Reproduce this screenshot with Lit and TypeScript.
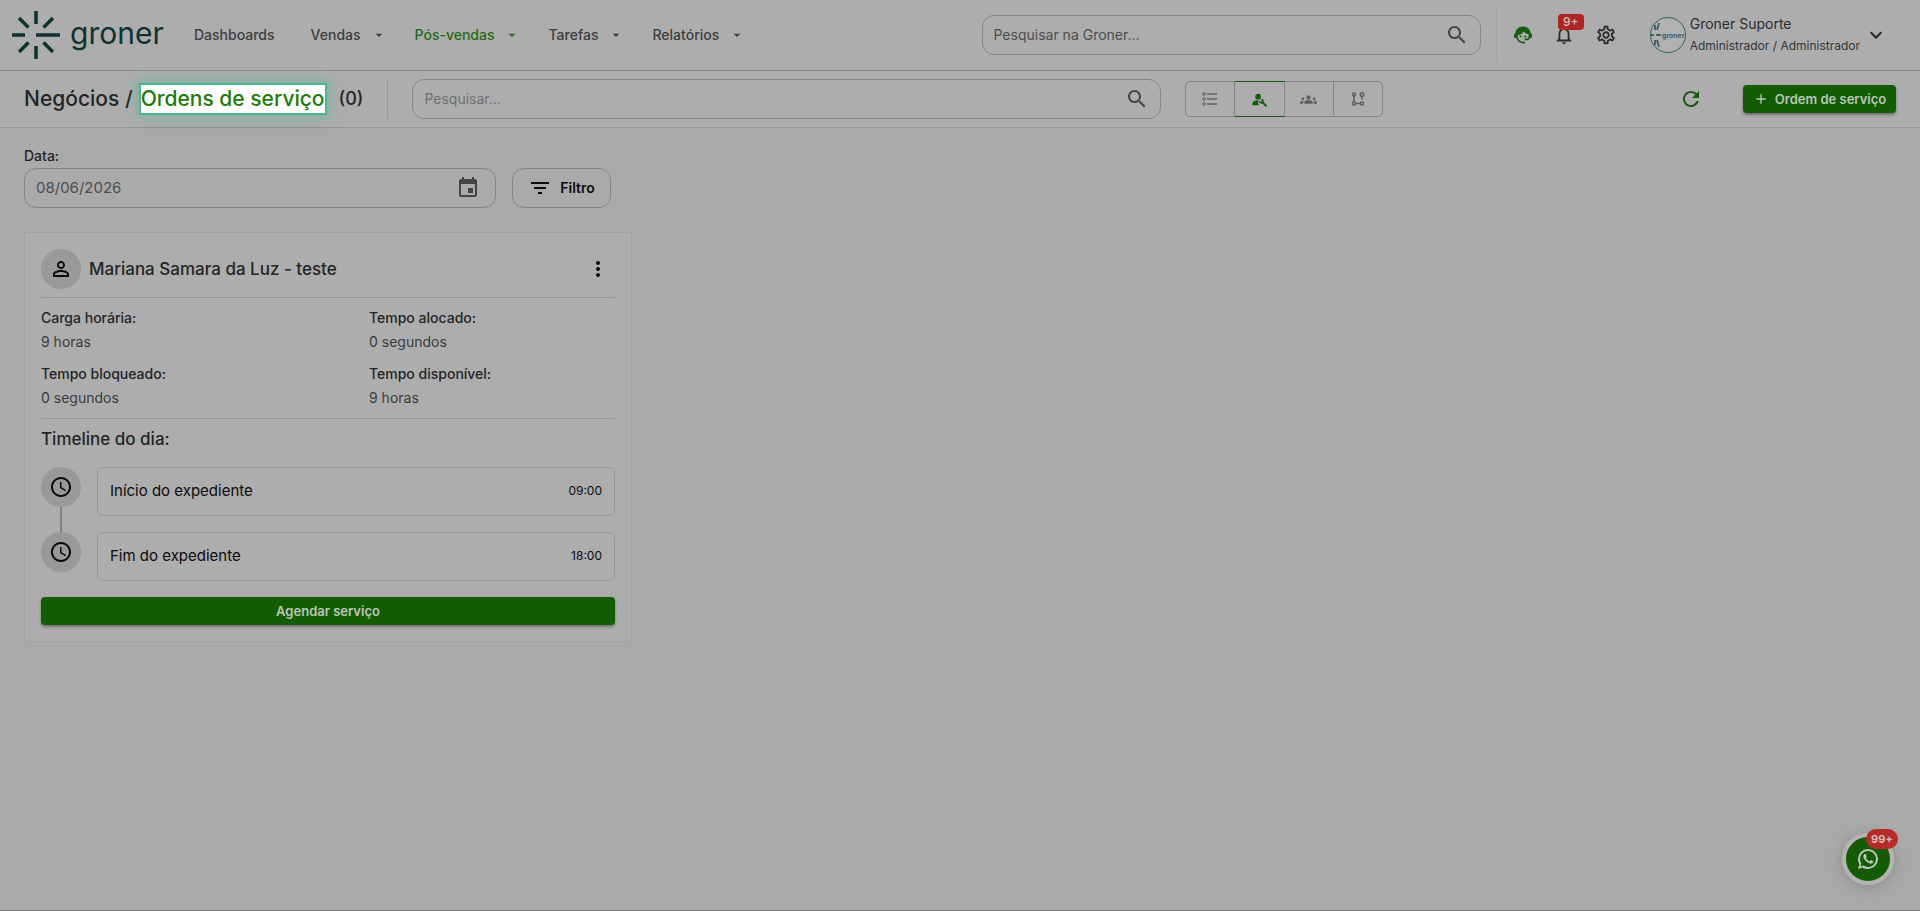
import { LitElement, html, svg, css } from "lit";
import { customElement, state } from "lit/decorators.js";
import { classMap } from "lit/directives/class-map.js";

const icon = (d: string, size = 24) => html`<svg class="icon" width=${size} height=${size} viewBox="0 0 24 24" aria-hidden="true"><path fill="currentColor" d=${d} /></svg>`;

const paths = {
  caret: "m7 10 5 5 5-5z",
  search: "M15.5 14h-.79l-.28-.27C15.41 12.59 16 11.11 16 9.5 16 5.91 13.09 3 9.5 3S3 5.91 3 9.5 5.91 16 9.5 16c1.61 0 3.09-.59 4.23-1.57l.27.28v.79l5 4.99L20.49 19l-4.99-5zm-6 0C7.01 14 5 11.99 5 9.5S7.01 5 9.5 5 14 7.01 14 9.5 11.99 14 9.5 14z",
  bell: "M12 22c1.1 0 2-.9 2-2h-4c0 1.1.9 2 2 2zm6-6v-5c0-3.07-1.63-5.64-4.5-6.32V4c0-.83-.67-1.5-1.5-1.5s-1.5.67-1.5 1.5v.68C7.64 5.36 6 7.92 6 11v5l-2 2v1h16v-1l-2-2zm-2 1H8v-6c0-2.48 1.51-4.5 4-4.5s4 2.02 4 4.5v6z",
  gear: "M19.43 12.98c.04-.32.07-.64.07-.98 0-.34-.03-.66-.07-.98l2.11-1.65c.19-.15.24-.42.12-.64l-2-3.46c-.09-.16-.26-.25-.44-.25-.06 0-.12.01-.17.03l-2.49 1c-.52-.4-1.08-.73-1.69-.98l-.38-2.65C14.46 2.18 14.25 2 14 2h-4c-.25 0-.46.18-.49.42l-.38 2.65c-.61.25-1.17.59-1.69.98l-2.49-1c-.06-.02-.12-.03-.18-.03-.17 0-.34.09-.43.25l-2 3.46c-.13.22-.07.49.12.64l2.11 1.65c-.04.32-.07.65-.07.98 0 .33.03.66.07.98l-2.11 1.65c-.19.15-.24.42-.12.64l2 3.46c.09.16.26.25.44.25.06 0 .12-.01.17-.03l2.49-1c.52.4 1.08.73 1.69.98l.38 2.65c.03.24.24.42.49.42h4c.25 0 .46-.18.49-.42l.38-2.65c.61-.25 1.17-.59 1.69-.98l2.49 1c.06.02.12.03.18.03.17 0 .34-.09.43-.25l2-3.46c.12-.22.07-.49-.12-.64l-2.11-1.65zm-1.98-1.71c.04.31.05.52.05.73 0 .21-.02.43-.05.73l-.14 1.13.89.7 1.08.84-.7 1.21-1.27-.51-1.04-.42-.9.68c-.43.32-.84.56-1.25.73l-1.06.43-.16 1.13-.2 1.35h-1.4l-.19-1.35-.16-1.13-1.06-.43c-.43-.18-.83-.41-1.23-.71l-.91-.7-1.06.43-1.27.51-.7-1.21 1.08-.84.89-.7-.14-1.13c-.03-.31-.05-.54-.05-.74s.02-.43.05-.73l.14-1.13-.89-.7-1.08-.84.7-1.21 1.27.51 1.04.42.9-.68c.43-.32.84-.56 1.25-.73l1.06-.43.16-1.13.2-1.35h1.39l.19 1.35.16 1.13 1.06.43c.43.18.83.41 1.23.71l.91.7 1.06-.43 1.27-.51.7 1.21-1.07.85-.89.7.14 1.13zM12 8c-2.21 0-4 1.79-4 4s1.79 4 4 4 4-1.79 4-4-1.79-4-4-4zm0 6c-1.1 0-2-.9-2-2s.9-2 2-2 2 .9 2 2-.9 2-2 2z",
  chevron: "M7.41 8.59 12 13.17l4.59-4.58L18 10l-6 6-6-6 1.41-1.41z",
  engineer: "M10.67 13.02C10.45 13.01 10.23 13 10 13c-2.42 0-4.680.67-6.610 1.820C2.510 15.340 2 16.320 2 17.350V20h9.260C10.470 18.870 10 17.490 10 16c0-1.070.25-2.070.67-2.980zM10 4a4 4 0 1 0 0 8 4 4 0 0 0 0-8zM22.600 20.400l-4.700-4.700c.5-1.200.2-2.600-.7-3.600-1-1-2.600-1.200-3.800-.6l2.200 2.200-1.600 1.600-2.200-2.200c-.6 1.200-.4 2.800.6 3.800 1 .9 2.400 1.200 3.600.7l4.700 4.700c.2.2.5.2.7 0l1.200-1.200c.3-.2.3-.5 0-.7z",
  groups: "M12 12.750c1.630 0 3.070.39 4.240.9 1.080.48 1.760 1.560 1.760 2.730V18H6v-1.610c0-1.180.68-2.260 1.760-2.730 1.170-.52 2.610-.91 4.240-.91zM4 13c1.100 0 2-.9 2-2s-.9-2-2-2-2 .9-2 2 .9 2 2 2zm1.130 1.100C4.760 14.040 4.390 14 4 14c-.99 0-1.930.21-2.780.58C.48 14.900 0 15.620 0 16.430V18h4.500v-1.610c0-.83.23-1.610.63-2.290zM20 13c1.100 0 2-.9 2-2s-.9-2-2-2-2 .9-2 2 .9 2 2 2zm4 3.430c0-.81-.48-1.530-1.220-1.850-.85-.37-1.790-.58-2.780-.58-.39 0-.76.04-1.130.1.4.68.63 1.460.63 2.290V18H24v-1.570zM12 6c1.660 0 3 1.340 3 3s-1.340 3-3 3-3-1.340-3-3 1.340-3 3-3z",
  refresh: "M17.650 6.350C16.200 4.900 14.210 4 12 4c-4.420 0-7.990 3.580-7.990 8s3.570 8 7.990 8c3.730 0 6.840-2.550 7.730-6h-2.080c-.82 2.330-3.040 4-5.650 4-3.310 0-6-2.690-6-6s2.690-6 6-6c1.660 0 3.140.69 4.220 1.780L13 11h7V4l-2.350 2.350z",
  plus: "M19 13h-6v6h-2v-6H5v-2h6V5h2v6h6v2z",
  calendar: "M17 12h-5v5h5v-5zM16 1v2H8V1H6v2H5c-1.110 0-1.990.9-1.990 2L3 19c0 1.100.89 2 2 2h14c1.100 0 2-.9 2-2V5c0-1.100-.9-2-2-2h-1V1h-2zm3 18H5V8h14v11z",
  filter: "M10 18h4v-2h-4v2zM3 6v2h18V6H3zm3 7h12v-2H6v2z",
  person: "M12 5.900c1.160 0 2.100.94 2.100 2.100s-.94 2.100-2.100 2.100S9.900 9.160 9.900 8s.94-2.100 2.100-2.100m0 9c2.970 0 6.100 1.460 6.100 2.100v1.100H5.900V17c0-.64 3.130-2.100 6.100-2.100M12 4C9.790 4 8 5.790 8 8s1.790 4 4 4 4-1.790 4-4-1.790-4-4-4zm0 9c-2.670 0-8 1.340-8 4v3h16v-3c0-2.660-5.330-4-8-4z",
  dots: "M12 8c1.100 0 2-.9 2-2s-.9-2-2-2-2 .9-2 2 .9 2 2 2zm0 2c-1.100 0-2 .9-2 2s.9 2 2 2 2-.9 2-2-.9-2-2-2zm0 6c-1.100 0-2 .9-2 2s.9 2 2 2 2-.9 2-2-.9-2-2-2z",
  clock: "M11.990 2C6.470 2 2 6.480 2 12s4.470 10 9.990 10C17.520 22 22 17.520 22 12S17.520 2 11.990 2zM12 20c-4.420 0-8-3.580-8-8s3.580-8 8-8 8 3.580 8 8-3.580 8-8 8zm.5-13H11v6l5.250 3.150.75-1.230-4.500-2.670z",
  whatsapp: "M16.750 13.960c.25.13.41.2.46.3.06.11.04.61-.21 1.180-.2.56-1.240 1.100-1.700 1.120-.46.02-.47.36-2.960-.73-2.490-1.090-3.990-3.750-4.110-3.920-.12-.17-.96-1.380-.92-2.610.05-1.220.69-1.800.95-2.040.24-.26.51-.29.68-.26h.47c.15 0 .36-.06.55.45l.69 1.870c.06.13.1.28.01.44l-.27.41-.39.42c-.12.12-.26.25-.12.5.12.26.62 1.090 1.320 1.780.91.88 1.710 1.170 1.950 1.300.24.14.39.12.54-.04l.81-.94c.19-.25.35-.19.58-.11l1.670.88M12 2a10 10 0 0 1 10 10 10 10 0 0 1-10 10c-1.970 0-3.800-.57-5.350-1.550L2 22l1.550-4.650A9.969 9.969 0 0 1 2 12 10 10 0 0 1 12 2m0 2a8 8 0 0 0-8 8c0 1.720.54 3.310 1.460 4.610L4.500 19.500l2.890-.96A7.950 7.950 0 0 0 12 20a8 8 0 0 0 8-8 8 8 0 0 0-8-8z",
};

const listIcon = html`<svg class="icon" width="18" height="18" viewBox="0 0 18 18" fill="none" stroke="currentColor" aria-hidden="true">
  <path stroke-width="1.500" d="M6 4h10M6 9h10M6 14h10" />
  <circle cx="3" cy="4" r="1.300" /><circle cx="3" cy="9" r="1.300" /><circle cx="3" cy="14" r="1.300" /></svg>`;

const routeIcon = html`<svg class="icon" width="16" height="16" viewBox="0 0 16 16" fill="none" stroke="currentColor" stroke-width="1.500" aria-hidden="true">
  <circle cx="4" cy="3.500" r="1.500" /><circle cx="4" cy="12.500" r="1.500" /><circle cx="12" cy="12.500" r="1.500" /><circle cx="12" cy="3.500" r="1.800" />
  <path d="M4 5v6M5.500 12.500h5M12 5.500v3" /></svg>`;

const agentIcon = html`<svg class="icon" width="20" height="20" viewBox="0 0 20 20" aria-hidden="true">
  <path fill="currentColor" d="M10 1.500c-4.200 0-7.300 2.900-7.700 6.700C1.500 8.500 1 9.200 1 10v1.500c0 1 .8 1.800 1.800 1.800h.6c1 3 3.600 5.200 6.600 5.200h2v-1.700h-2c-2.900 0-5.300-2.600-5.300-5.800v-.6c2.600-.5 4.700-1.900 5.900-3.900 1.200 1.500 3 2.400 4.900 2.600v2.700c0 1-.8 1.800-1.800 1.800h-2.200v1.600h2.600c1.300 0 2.400-.8 2.900-1.900h.2c1 0 1.800-.8 1.800-1.800V10c0-.8-.5-1.500-1.300-1.800C17.300 4.400 14.200 1.500 10 1.500z" />
  <circle cx="7.500" cy="11.500" r="1.100" fill="currentColor" /><circle cx="12.300" cy="11.500" r="1.100" fill="currentColor" /></svg>`;

const rays = svg`<path d="M24 0v13M24 35v13M0 24h13M24 24h24M7 7l9.500 9.500M41 7l-9.500 9.500M7 41l9.500-9.500M41 41l-9.500-9.500" />`;

@customElement("app-root")
export class AppRoot extends LitElement {
  @state() private view = 1;

  private menu = [
    { label: "Dashboards", sub: false, active: false },
    { label: "Vendas", sub: true, active: false },
    { label: "Pós-vendas", sub: true, active: true },
    { label: "Tarefas", sub: true, active: false },
    { label: "Relatórios", sub: true, active: false },
  ];

  private views = [
    { name: "Lista", glyph: listIcon },
    { name: "Técnicos", glyph: icon(paths.engineer, 17) },
    { name: "Equipes", glyph: icon(paths.groups, 17) },
    { name: "Rotas", glyph: routeIcon },
  ];

  private stats = [
    ["Carga horária:", "9 horas"],
    ["Tempo alocado:", "0 segundos"],
    ["Tempo bloqueado:", "0 segundos"],
    ["Tempo disponível:", "9 horas"],
  ];

  private events = [
    ["Início do expediente", "09:00"],
    ["Fim do expediente", "18:00"],
  ];

  static styles = css`
    :host {
      display: flex;
      flex-direction: column;
      min-height: 100vh;
      box-sizing: border-box;
      border-bottom: 1px solid #7e7e7e;
      background: #aaaaaa;
      color: #232527;
      font: 14px/20px Inter, "Noto Sans", sans-serif;
    }
    *, *::before { box-sizing: border-box; }
    button, input { font: inherit; color: inherit; margin: 0; }
    button { border: 0; padding: 0; background: none; cursor: pointer; }
    a { color: inherit; text-decoration: none; }
    h1, h2, h3, p, dl, dd, ol { margin: 0; padding: 0; }
    .icon { display: block; flex: none; }

    .topbar {
      display: flex;
      align-items: center;
      height: 71px;
      padding: 0 32px 0 12px;
      background: #adadad;
      border-bottom: 1px solid #8c8c8c;
    }
    .logo { display: flex; align-items: center; gap: 10px; color: #0c3330; width: 166px; }
    .logo svg { flex: none; stroke: currentColor; stroke-width: 3.500; fill: none; }
    .word { font-size: 30px; line-height: 36px; padding-bottom: 4px; }
    .menu { display: flex; gap: 28px; margin-left: 16px; }
    .menu a { display: flex; align-items: center; gap: 10px; font-weight: 500; color: #3c3e40; white-space: nowrap; padding-right: 8px; }
    .menu a.sub { padding-right: 0; }
    .menu a.active { color: #256a17; }
    .spacer { flex: 1; }
    .field {
      display: flex;
      align-items: center;
      height: 40px;
      padding: 0 11px;
      border: 1px solid #858585;
      border-radius: 12px;
      color: #444444;
    }
    .field input { flex: 1; min-width: 0; border: 0; padding: 0; outline: 0; background: none; color: #4c4e50; }
    .field input::placeholder { color: #4c4e50; opacity: 1; }
    .field.global { flex: 0 1 26vw; margin-bottom: 1px; }
    .field.page { flex: 0 1 39vw; }
    .field.page input::placeholder { color: #707274; }
    .tools { display: flex; align-items: center; gap: 20px; height: 54px; margin-left: 15px; padding-left: 16px; border-left: 1px solid #a5a5a5; color: #2c2f31; }
    .tools .agent { color: #146010; }
    .bell { position: relative; }
    .count {
      position: absolute;
      left: 5px;
      top: -10px;
      width: 26px;
      line-height: 16px;
      border-radius: 4px;
      background: #b02522;
      color: #c9c0c0;
      font-size: 12px;
      font-weight: 500;
      text-align: center;
    }
    .user { display: flex; align-items: center; gap: 4px; margin-left: 33px; text-align: left; }
    .avatar { flex: none; display: block; }
    .name, .role { display: block; white-space: nowrap; }
    .name { line-height: 22px; color: #2b2d2f; }
    .role { font-size: 12px; line-height: 22px; color: #333537; }

    .subbar {
      display: flex;
      align-items: center;
      height: 57px;
      padding: 0 24px;
      background: #adadad;
      border-bottom: 1px solid #949494;
    }
    .title { display: flex; align-items: center; font-size: 21px; line-height: 28px; font-weight: 500; white-space: nowrap; }
    .current {
      margin: 0 14px 0 8px;
      outline: 2px solid #45b892;
      background: #ffffff;
      color: #1b7d06;
      box-shadow: 0 0 12px 6px rgba(70, 184, 146, 0.35);
    }
    .total { font-size: 18px; }
    .rule { width: 1px; height: 40px; margin: 0 24px; background: #989898; }
    .views { display: flex; margin-left: 24px; border: 1px solid #858585; border-radius: 5px; width: 198px; height: 36px; }
    .views button { flex: 1; display: grid; place-items: center; color: #5f5f5f; border-right: 1px solid #858585; }
    .views button:last-child { border-right: 0; }
    .views button.on { color: #155c0c; margin: -1px 0; border-top: 1px solid #155c0c; border-bottom: 1px solid #155c0c; }
    .refresh { color: #155c0c; margin-right: 40px; }
    .primary {
      display: flex;
      align-items: center;
      justify-content: center;
      gap: 6px;
      height: 28px;
      border-radius: 4px;
      background: #145c04;
      color: #bac7b6;
      font-size: 13px;
      font-weight: 600;
      white-space: nowrap;
      box-shadow: 0 2px 3px rgba(0, 0, 0, 0.35);
    }
    .new { width: 153px; }

    main { padding: 18px 24px; }
    .filters { display: flex; align-items: flex-end; gap: 16px; }
    .date { flex: 0 1 472px; }
    .date label { display: block; font-weight: 500; margin-bottom: 2px; }
    .date .field { padding-right: 15px; }
    .date input { font-size: 15px; }
    .filter {
      display: flex;
      align-items: center;
      justify-content: center;
      gap: 8px;
      width: 99px;
      height: 40px;
      border: 1px solid #858585;
      border-radius: 12px;
      color: #0b0b0b;
      font-weight: 600;
    }
    .cards { display: grid; grid-template-columns: repeat(3, minmax(0, 1fr)); gap: 24px; margin-top: 24px; }
    .card { padding: 16px; border: 1px solid #a2a2a2; border-radius: 2px; background: #adadad; }
    .head { display: flex; align-items: center; gap: 8px; padding-bottom: 8px; border-bottom: 1px solid #969696; }
    .head h2 { flex: 1; font-size: 17px; line-height: 24px; font-weight: 500; }
    .head button { color: #0b0b0b; margin-right: 5px; }
    .disc { display: grid; place-items: center; flex: none; width: 40px; height: 40px; border-radius: 50%; background: #999999; color: #0b0b0b; }
    .stats { display: grid; grid-template-columns: 4fr 3fr; gap: 8px 0; padding: 8px 0; border-bottom: 1px solid #969696; }
    .stats dt { font-weight: 500; line-height: 24px; }
    .stats dd { line-height: 24px; color: #3a3c3e; }
    .card h3 { font-size: 17px; line-height: 24px; font-weight: 500; margin: 8px 0 16px; }
    .timeline { list-style: none; }
    .timeline li { display: flex; gap: 16px; }
    .rail { display: flex; flex-direction: column; align-items: center; }
    .line { flex: 1; width: 2px; background: #808080; }
    .event {
      flex: 1;
      display: flex;
      align-items: center;
      justify-content: space-between;
      padding: 13px 12px 14px;
      margin-bottom: 16px;
      border: 1px solid #969696;
      border-radius: 6px;
      color: #0b0b0b;
      font-size: 15px;
    }
    .event time { font-size: 12px; }
    .book { width: 100%; }

    .chat {
      position: fixed;
      right: 26px;
      bottom: 26px;
      display: grid;
      place-items: center;
      width: 52px;
      height: 52px;
      border: 4px solid #b4b4b4;
      border-radius: 50%;
      background: #145c04;
      color: #bccabb;
      box-shadow: 0 2px 16px rgba(0, 0, 0, 0.2);
    }
    .unread {
      position: absolute;
      top: -8px;
      right: -8px;
      width: 32px;
      line-height: 20px;
      border-radius: 10px;
      background: #b62a28;
      color: #cdbdbd;
      font-size: 11px;
      font-weight: 700;
    }
  `;

  render() {
    return html`
      <header class="topbar">
        <a class="logo" href="#" aria-label="groner">
          <svg width="48" height="48" viewBox="0 0 48 48" aria-hidden="true">${rays}</svg>
          <span class="word">groner</span>
        </a>
        <nav class="menu">
          ${this.menu.map((m) => html`<a href="#" class=${classMap({ sub: m.sub, active: m.active })}>${m.label}${m.sub ? icon(paths.caret, 16) : ""}</a>`)}
        </nav>
        <span class="spacer"></span>
        <div class="field global">
          <input type="text" aria-label="Pesquisar na Groner" placeholder="Pesquisar na Groner..." />${icon(paths.search)}
        </div>
        <div class="tools">
          <button class="agent" aria-label="Suporte">${agentIcon}</button>
          <button class="bell" aria-label="Notificações">${icon(paths.bell, 22)}<span class="count">9+</span></button>
          <button aria-label="Configurações">${icon(paths.gear, 22)}</button>
        </div>
        <button class="user">
          <svg class="avatar" width="36" height="36" viewBox="0 0 36 36" aria-hidden="true">
            <circle cx="18" cy="18" r="17.500" fill="#b1b1b1" stroke="#2b6647" />
            <path d="M1 18h3M6 18h5M5 8v5M5 23v5M9 6l-2 7M9 30l-2-7" stroke="#3f6277" stroke-width="2" />
            <text x="12" y="21" font-size="7" fill="#2f5267" font-weight="600">groner</text>
          </svg>
          <span><span class="name">Groner Suporte</span><span class="role">Administrador / Administrador</span></span>
          ${icon(paths.chevron, 24)}
        </button>
      </header>

      <section class="subbar">
        <h1 class="title"><span>Negócios /</span><a class="current" href="#">Ordens de serviço</a><span class="total">(0)</span></h1>
        <span class="rule"></span>
        <div class="field page"><input type="text" aria-label="Pesquisar" placeholder="Pesquisar..." />${icon(paths.search)}</div>
        <div class="views">
          ${this.views.map((v, i) => html`<button class=${classMap({ on: i === this.view })} aria-label=${v.name} @click=${() => (this.view = i)}>${v.glyph}</button>`)}
        </div>
        <span class="spacer"></span>
        <button class="refresh" aria-label="Atualizar">${icon(paths.refresh)}</button>
        <button class="primary new">${icon(paths.plus, 16)}Ordem de serviço</button>
      </section>

      <main>
        <div class="filters">
          <div class="date">
            <label for="date">Data:</label>
            <div class="field"><input id="date" type="text" value="08/06/2026" />${icon(paths.calendar)}</div>
          </div>
          <button class="filter">${icon(paths.filter)}Filtro</button>
        </div>

        <div class="cards">
          <article class="card">
            <div class="head">
              <span class="disc">${icon(paths.person, 24)}</span>
              <h2>Mariana Samara da Luz - teste</h2>
              <button aria-label="Mais opções">${icon(paths.dots)}</button>
            </div>
            <dl class="stats">
              ${this.stats.map(([k, v]) => html`<div><dt>${k}</dt><dd>${v}</dd></div>`)}
            </dl>
            <h3>Timeline do dia:</h3>
            <ol class="timeline">
              ${this.events.map(([label, time], i) => html`<li>
                <div class="rail"><span class="disc">${icon(paths.clock)}</span>${i < this.events.length - 1 ? html`<span class="line"></span>` : ""}</div>
                <div class="event"><span>${label}</span><time>${time}</time></div>
              </li>`)}
            </ol>
            <button class="primary book">Agendar serviço</button>
          </article>
        </div>
      </main>

      <button class="chat" aria-label="WhatsApp">${icon(paths.whatsapp)}<span class="unread">99+</span></button>
    `;
  }
}
